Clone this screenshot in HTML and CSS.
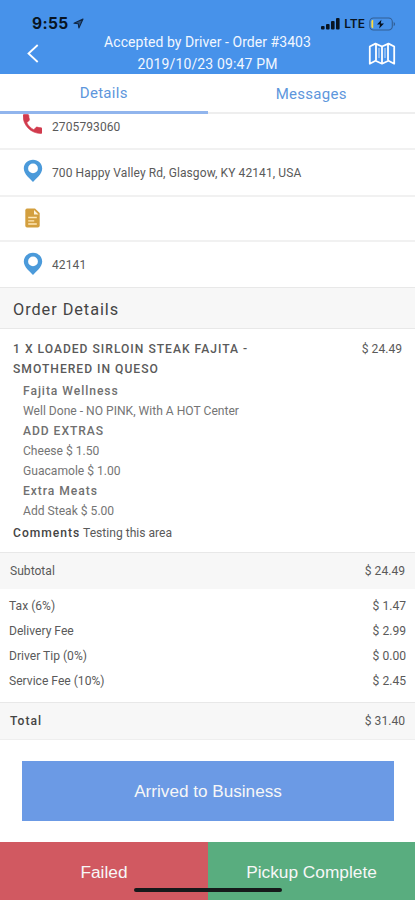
FILE: index.html
```html
<!DOCTYPE html>
<html lang="en">
<head>
<meta charset="utf-8">
<title>Order #3403</title>
<link rel="stylesheet" href="styles.css">
</head>
<body>
<div class="screen">
  <header class="header">
    <div class="status">
      <span class="time">9:55</span>
      <svg class="locate" width="11" height="11" viewBox="0 0 11 11"><path d="M1 5.3 10 1 5.900 10 5.300 5.800Z" fill="#102642" fill-opacity=".6" stroke="#102642" stroke-width="1.1" stroke-linejoin="round"/></svg>
      <svg class="signal" width="19" height="12" viewBox="0 0 19 12" fill="#081422"><rect x="0" y="8" width="3.6" height="3.6" rx="1"/><rect x="5" y="6" width="3.6" height="5.6" rx="1"/><rect x="10" y="3" width="3.6" height="8.6" rx="1"/><rect x="15" y="0" width="3.6" height="11.6" rx="1"/></svg>
      <span class="lte">LTE</span>
      <svg class="battery" width="27" height="14" viewBox="0 0 27 14"><rect x=".8" y="1" width="22.5" height="12" rx="3.7" fill="none" stroke="#325e94" stroke-width="1.1"/><path d="M24.7 4.700q2.800 2.300 0 4.600Z" fill="#325e94"/><path d="M4.200 2.800v8.400Q2.400 11.200 2.400 9.500v-5Q2.400 2.800 4.200 2.800Z" fill="#ffdc3b"/><path d="M12.400 2.800 8 7.400h3l-.8 4 4.800-4.900H11.800Z" fill="#06111f"/></svg>
    </div>
    <div class="nav">
      <svg class="back" width="12" height="19" viewBox="0 0 12 19"><path d="M10.700 1 1.500 9.500l9.200 8.500" fill="none" stroke="#fff" stroke-width="1.800"/></svg>
      <div class="title"><div class="title-main">Accepted by Driver - Order #3403</div><div class="title-date">2019/10/23 09:47 PM</div></div>
      <svg class="map" width="28" height="24" viewBox="0 0 28 24" fill="none" stroke="#fff" stroke-width="1.800" stroke-linejoin="round"><path d="M1.800 4.500 7.500 1.600 14 4.500 20.500 1.600l5.700 2.900v17.200l-5.700-2.900-6.500 2.900-6.500-2.900-5.700 2.900Z"/><path d="M8 2v16.500M14 4.500v16.500M20 2v16.500"/><path d="M11 6v10M17 6v10" stroke-width="1.200" opacity=".6"/></svg>
    </div>
  </header>
  <nav class="tabs"><div class="tab active"><span class="t-details">Details</span></div><div class="tab"><span class="t-messages">Messages</span></div></nav>
  <section class="contacts">
    <div class="contact phone-row"><svg class="phone" width="19" height="20" viewBox="3 3 18 18"><path fill="#d13b4d" stroke="#d13b4d" stroke-width=".6" d="M6.620 10.790c1.440 2.830 3.760 5.140 6.590 6.590l2.200-2.200c.27-.27.67-.36 1.020-.24 1.120.37 2.330.57 3.570.57.55 0 1 .45 1 1V20c0 .55-.45 1-1 1C10.610 21 3 13.390 3 4c0-.55.45-1 1-1h3.500c.55 0 1 .45 1 1 0 1.250.2 2.450.57 3.570.11.35.03.74-.25 1.020z"/></svg><span class="number">2705793060</span></div>
    <div class="contact r2"><svg class="pin" width="20" height="24" viewBox="0 0 20 24"><path fill="#4b9ada" fill-rule="evenodd" d="M10 .8C4.800.8.800 4.700.800 9.500c0 5.600 6.400 10.400 9.200 13.500 2.800-3.100 9.200-7.900 9.200-13.500C19.200 4.700 15.200.8 10 .8Zm0 3.700a4.900 4.900 0 1 1 0 9.800 4.900 4.900 0 0 1 0-9.800Z"/></svg><span class="address">700 Happy Valley Rd, Glasgow, KY 42141, USA</span></div>
    <div class="contact r3"><svg class="note" width="15" height="20" viewBox="0 0 15 20"><path fill="#d39f3e" d="M2 .5h8L14.700 5v12.500q0 2-2 2H2q-1.700 0-1.700-2v-15q0-2 1.700-2Z"/><path d="M9 2v4.500h4.500Z" fill="#fff4dc"/><path d="M3.200 9.500h8.600M3.200 12.800h6M3.200 16h8.600" stroke="#ffe8b8" stroke-width="1.300"/></svg></div>
    <div class="contact r4"><svg class="pin" width="20" height="24" viewBox="0 0 20 24"><path fill="#4b9ada" fill-rule="evenodd" d="M10 .8C4.800.8.800 4.700.800 9.500c0 5.600 6.400 10.400 9.200 13.500 2.800-3.100 9.200-7.900 9.200-13.500C19.200 4.700 15.200.8 10 .8Zm0 3.700a4.900 4.900 0 1 1 0 9.800 4.900 4.900 0 0 1 0-9.800Z"/></svg><span class="zip">42141</span></div>
  </section>
  <h2 class="heading">Order Details</h2>
  <section class="item">
    <div class="item-head"><div class="item-name"><span class="n1">1 X LOADED SIRLOIN STEAK FAJITA -</span><br><span class="n2">SMOTHERED IN QUESO</span></div><span class="item-price">$ 24.49</span></div>
    <div class="options">
      <div class="group">Fajita Wellness</div>
      <div class="choice">Well Done - NO PINK, With A HOT Center</div>
      <div class="group extras">ADD EXTRAS</div>
      <div class="choice">Cheese $ 1.50</div>
      <div class="choice">Guacamole $ 1.00</div>
      <div class="group">Extra Meats</div>
      <div class="choice">Add Steak $ 5.00</div>
    </div>
    <div class="comments"><b>Comments</b> <span>Testing this area</span></div>
  </section>
  <div class="sum subtotal"><span>Subtotal</span><span>$ 24.49</span></div>
  <section class="fees">
    <div class="fee"><span>Tax (6%)</span><span>$ 1.47</span></div>
    <div class="fee"><span>Delivery Fee</span><span>$ 2.99</span></div>
    <div class="fee"><span>Driver Tip (0%)</span><span>$ 0.00</span></div>
    <div class="fee"><span>Service Fee (10%)</span><span>$ 2.45</span></div>
  </section>
  <div class="sum total"><b>Total</b><span>$ 31.40</span></div>
  <div class="action"><button class="arrived">Arrived to Business</button></div>
  <footer class="footer"><button class="failed">Failed</button><button class="pickup">Pickup Complete</button><i class="home"></i></footer>
</div>
</body>
</html>
```
FILE: styles.css
```css
* { box-sizing: border-box; }
body { margin: 0; background: #fff; font-family: Roboto, sans-serif; color: #5a5a5a; }
svg { display: block; flex: none; }
button { border: 0; padding: 0; color: #f7f7f7; font: 17.300px "Liberation Sans", sans-serif; }
.screen { width: 415px; height: 900px; overflow: hidden; display: flex; flex-direction: column; }
.screen > * { flex: none; }

.header { height: 74px; background: #4792ea; color: #f2f7ff; }
.status { height: 32px; padding: 15px 19px 0 32px; display: flex; align-items: center; color: #081422; }
.time { font: 700 15.500px/17px Inter, sans-serif; letter-spacing: .4px; }
.locate { margin-left: 4px; }
.signal { margin-left: auto; }
.lte { margin: 0 4px 0 4px; font: 600 12px/16px Inter, sans-serif; }
.nav { height: 42px; padding: 0 19px 0 27px; display: flex; }
.back { margin-top: 12px; }
.title { flex: 1; padding-left: 8px; text-align: center; line-height: 22px; font-size: 14px; margin-top: -1px; }
.title-date { letter-spacing: .15px; }
.title-main { letter-spacing: .05px; }
.map { margin-top: 10px; }

.tabs { height: 40px; display: flex; border-bottom: 2px solid #eee; }
.tab { width: 50%; height: 40px; text-align: center; font-size: 15px; line-height: 40px; color: #5d96dc; letter-spacing: .3px; }
.tab.active { border-bottom: 3px solid #91b5ed; line-height: 38px; }

.contacts { height: 173px; font-size: 12px; }
.contact { display: flex; align-items: center; padding-left: 23px; gap: 9px; border-bottom: 2px solid #f1f1f1; letter-spacing: .1px; }
.phone-row { height: 36px; overflow: hidden; align-items: flex-start; gap: 10px; }
.number { line-height: 26px; }
.r2 { height: 47px; }
.pin { margin-top: -3px; }
.r3 { height: 45px; padding-left: 25px; }
.note { margin-top: -1px; }
.r4 { height: 46px; border: 0; }

.heading { margin: 0; height: 42px; padding-left: 13px; background: #f7f7f7; border: solid #e8e8e8; border-width: 1px 0; color: #444; font-size: 16.300px; font-weight: 400; line-height: 43px; letter-spacing: .95px; }
.item { height: 223px; padding: 10px 13px 0; font-size: 12.100px; line-height: 20px; }
.item-head { display: flex; justify-content: space-between; }
.item-name { font-weight: 500; letter-spacing: 1px; }
.options { padding: 2px 0 0 10px; }
.group { font-weight: 500; letter-spacing: .95px; color: #707070; }
.choice { color: #757575; }
.comments { margin-top: 2px; }
b { font-weight: 500; letter-spacing: 1px; color: #444; }

.sum, .fee { display: flex; justify-content: space-between; font-size: 12.100px; }
.sum { height: 37px; line-height: 37px; padding: 0 10px; background: #f7f7f7; border-top: 1px solid #e8e8e8; }
.fees { height: 113px; padding: 5px 9px 0; }
.fee { line-height: 25px; }
.total { height: 38px; border-bottom: 1px solid #eee; }
.action { height: 102px; padding: 21px 21px 0 22px; }
.arrived { width: 100%; height: 60px; background: #6b9ae5; font-size: 17.150px; }
.footer { height: 58px; display: flex; position: relative; }
.failed, .pickup { height: 58px; padding-top: 3px; }
.failed { width: 208px; background: #d15961; }
.pickup { flex: 1; background: #59ad7f; }
.home { position: absolute; left: 134px; bottom: 8px; width: 148px; height: 4px; border-radius: 2px; background: #15191a; }
```
